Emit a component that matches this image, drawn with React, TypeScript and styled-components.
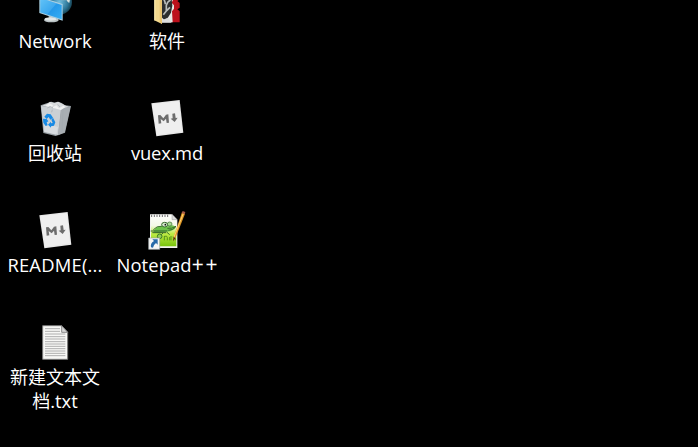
import React from 'react';
import styled, { createGlobalStyle } from 'styled-components';

const GlobalStyle = createGlobalStyle`
  html, body { margin: 0; background: #000; overflow: hidden; }
`;

const Desktop = styled.main`
  height: 447px;
  overflow: hidden;
  background: #000;
`;

const IconGrid = styled.div`
  display: grid;
  grid-template-columns: repeat(2, 112px);
  grid-auto-rows: 112px;
  width: 224px;
  margin-top: -20px;
  margin-left: -1px;
`;

const Shortcut = styled.div`
  display: flex;
  flex-direction: column;
  align-items: center;
`;

const Picture = styled.svg`
  display: block;
  flex: none;
  width: 50px;
  height: 50px;
`;

const Label = styled.span<{ $spacing?: number }>`
  margin-top: -1px;
  color: #fff;
  font-family: 'Open Sans', 'Noto Sans CJK SC', sans-serif;
  font-size: 18.4px;
  line-height: 24px;
  letter-spacing: ${(p) => p.$spacing ?? 0}px;
  white-space: pre;
`;

const CjkLabel = styled(Label)`
  margin-top: -2px;
  font-family: 'Noto Sans CJK SC', sans-serif;
  font-size: 18px;
  font-weight: 400;
`;

const LabelRow = styled.div`
  display: flex;
  height: 24px;
  margin-top: 2px;
`;

const WideSigns = styled.span`
  font-size: 21px;
  line-height: 0;
  letter-spacing: 1.8px;
  margin-right: -1.8px;
`;

const NetworkIcon = () => (
  <Picture viewBox="0 0 150 150">
    <defs>
      <linearGradient id="screen" x1="0" y1="0" x2="1" y2="1">
        <stop offset="0" stopColor="#62c3f8" />
        <stop offset=".55" stopColor="#2499ea" />
        <stop offset="1" stopColor="#37aff4" />
      </linearGradient>
      <radialGradient id="globe">
        <stop offset="0" stopColor="#72bfe0" />
        <stop offset=".7" stopColor="#2c7596" />
        <stop offset="1" stopColor="#194556" />
      </radialGradient>
    </defs>
    <circle cx="88" cy="66" r="38" fill="url(#globe)" />
    <path d="M85 42l18 0 10 13 9 1-4 13-9-8-16 0z" fill="#8fb9c6" />
    <path d="M112 56l7 2-2 10-6-5z" fill="#d9dfda" />
    <path d="M56 103l20 5v11H56z" fill="#a4afb2" />
    <ellipse cx="64" cy="120" rx="22" ry="7" fill="#bac3c5" />
    <ellipse cx="62" cy="117" rx="18" ry="5" fill="#e2e7e7" />
    <path d="M28 50L98 72V122L28 99Z" fill="#a9cfe2" />
    <path d="M31 54L95 75V118L31 97Z" fill="url(#screen)" />
    <path d="M31 54L80 70L52 103L31 97Z" fill="#6bc8fa" opacity=".3" />
  </Picture>
);

const FolderIcon = () => (
  <Picture viewBox="0 0 150 150">
    <path d="M59 40h54v18l-7 5 7 6v14l-7 5 7 6v33H90z" fill="#bd101b" />
    <path d="M59 40h34v20l-4 8 7 8v10l-6 8 2 33H59z" fill="#e9e9e5" />
    <path d="M59 44h20l10 14 2 19-4 21-10 16-10 6-8-8z" fill="#2c2e2e" />
    <path d="M63 54q7 10 7 19M86 60q-10 4-13 16v17l-9 11M84 82l-10 10" fill="none" stroke="#b9bdbb" strokeWidth="5" />
    <path d="M59 121l19-8 11 15H59z" fill="#ddd" />
    <path d="M37 40h23v92l-23-11z" fill="#f4d98d" />
    <path d="M53 40h7v92l-7-6z" fill="#e9c571" />
    <path d="M37 40h3v83l-3-2z" fill="#fff0b5" />
  </Picture>
);

const RecycleIcon = () => (
  <Picture viewBox="0 0 150 150">
    <path d="M32 40l18-6 15-5 10 3 8-3 12 4 10 7 18 2-18 80-28 10-37-9z" fill="#989fa4" />
    <path d="M33 42l60 9-9 78-42-10z" fill="#cbd0d4" />
    <path d="M94 50l27-5-17 76-20 9z" fill="#a8aeb3" />
    <path d="M36 41l16-6 8-6 12 4 13-4 11 6 13 7 7 2-23 7z" fill="#d8dbdd" />
    <path d="M46 42l12-8 11 5-5 9 15-8 8 9 13-8 6 4-13 9z" fill="#f1f2f2" />
    <path d="M52 48l8-5 9 5M83 37l7 8M99 51l-3 69M67 53l-2 8" stroke="#a1a9af" strokeWidth="2" fill="none" />
    <path d="M43 97l20 3 21 5-5 23-36-8z" fill="#e1e5e8" opacity=".6" />
    <g fill="#178ae5">
      <path d="M43 74l8-9 11 2 7 10-8 6-5-8-6 6z" />
      <path d="M39 80l11 1 5 7-5 3 3 9-6 2-7-10z" />
      <path d="M69 77l7 14-4 10-9 2v4l-9-9 9-9v5l5-1-4-10z" />
    </g>
  </Picture>
);

const MarkdownIcon = () => (
  <Picture viewBox="0 0 150 150">
    <path d="M28 34L113 24L124 122L43 133Z" fill="#e8e8e8" />
    <path d="M31 37L110 28L120 118L45 129Z" fill="#efefef" />
    <path d="M50 95L48 70L55 69L64 79L72 68L79 67L81 92L74 93L72 80L65 88L56 81L58 94Z" fill="#6d6d6d" />
    <path d="M91 65l8-1 2 14 6-1-9 13-12-10 6-1z" fill="#6d6d6d" />
  </Picture>
);

const NotepadIcon = () => (
  <Picture viewBox="0 0 150 150">
    <defs>
      <linearGradient id="paper" x1="0" y1="0" x2="0" y2="1">
        <stop offset="0" stopColor="#fff" />
        <stop offset=".35" stopColor="#f4f9e6" />
        <stop offset=".6" stopColor="#c0ec45" />
        <stop offset="1" stopColor="#78c30c" />
      </linearGradient>
    </defs>
    <path d="M24 31h66l16 16v85H24z" fill="#f2f2ee" />
    <path d="M27 32h61l15 15v80H27z" fill="url(#paper)" />
    <path d="M90 31v16h16z" fill="#ddd" stroke="#777" />
    <path d="M29 32v7m8-7v7m8-7v7m8-7v7m8-7v7m8-7v7m8-7v7" stroke="#6b6b6b" strokeWidth="3" />
    <path d="M34 80l10-10 16-5 18 2 14-3 10 4-4 7-13 7-20 2-16 4-11-2z" fill="#6cc24a" />
    <path d="M34 77q12-13 25-10M76 73q13 2 26-6-8 12-23 12" fill="none" stroke="#315e26" strokeWidth="2.5" />
    <ellipse cx="68" cy="62" rx="9" ry="7" fill="#d5e9cd" stroke="#356a2a" strokeWidth="3" />
    <ellipse cx="83" cy="60" rx="7" ry="6" fill="#a9d995" stroke="#356a2a" strokeWidth="2" />
    <circle cx="70" cy="62" r="2.5" fill="#111" />
    <path d="M26 81h50M31 86h42" stroke="#35602a" strokeWidth="3" />
    <circle cx="53" cy="97" r="7" fill="#91cf50" stroke="#3d7828" strokeWidth="3" />
    <path d="M75 85l8 7M63 87l-5 5" stroke="#397328" strokeWidth="3" />
    <path d="M67 96v13m0-12q9-3 9 4v8m7-10v10m4-13v13m5-10q8-3 8 4v6" fill="none" stroke="#4b8715" strokeWidth="2.5" />
    <path d="M120 25l9 4-29 74-6 7 2-15z" fill="#df9726" />
    <path d="M124 28l-28 71" stroke="#ffd373" strokeWidth="3" />
    <path d="M119 27l9 4 2-7-8-3z" fill="#a85a47" />
    <path d="M95 99l5 4-7 9z" fill="#442a12" />
    <path d="M20 102h33v34H20z" fill="#f5f5f5" stroke="#9aa3a8" strokeWidth="2" />
    <path d="M31 106h16v16l-5-5q-8 6-9 14l-6-1q-3-12 9-19z" fill="#2769a9" />
  </Picture>
);

const TextIcon = () => (
  <Picture viewBox="0 0 150 150">
    <path d="M38 29h57l18 20v81H38z" fill="#f7f7f5" stroke="#777" strokeWidth="3" />
    <path d="M95 29v20h18z" fill="#d7d7d7" stroke="#777" strokeWidth="2.5" />
    <path d="M45 38h45M45 46h45M45 54h61M45 62h61M45 69h61M45 77h61M45 84h61M45 91h61M45 98h61M45 105h61M45 112h61M45 119h61" stroke="#999" strokeWidth="2.3" />
  </Picture>
);

export default function App() {
  return (
    <Desktop>
      <GlobalStyle />
      <IconGrid>
        <Shortcut><NetworkIcon /><Label>Network</Label></Shortcut>
        <Shortcut><FolderIcon /><CjkLabel>软件</CjkLabel></Shortcut>
        <Shortcut><RecycleIcon /><CjkLabel>回收站</CjkLabel></Shortcut>
        <Shortcut><MarkdownIcon /><Label $spacing={-0.25}>vuex.md</Label></Shortcut>
        <Shortcut><MarkdownIcon /><Label $spacing={0.2}>README(...</Label></Shortcut>
        <Shortcut><NotepadIcon /><Label $spacing={0.1}>Notepad<WideSigns>++</WideSigns></Label></Shortcut>
        <Shortcut>
          <TextIcon />
          <CjkLabel>新建文本文</CjkLabel>
          <LabelRow>
            <CjkLabel as="span">档</CjkLabel>
            <Label>.txt</Label>
          </LabelRow>
        </Shortcut>
      </IconGrid>
    </Desktop>
  );
}
